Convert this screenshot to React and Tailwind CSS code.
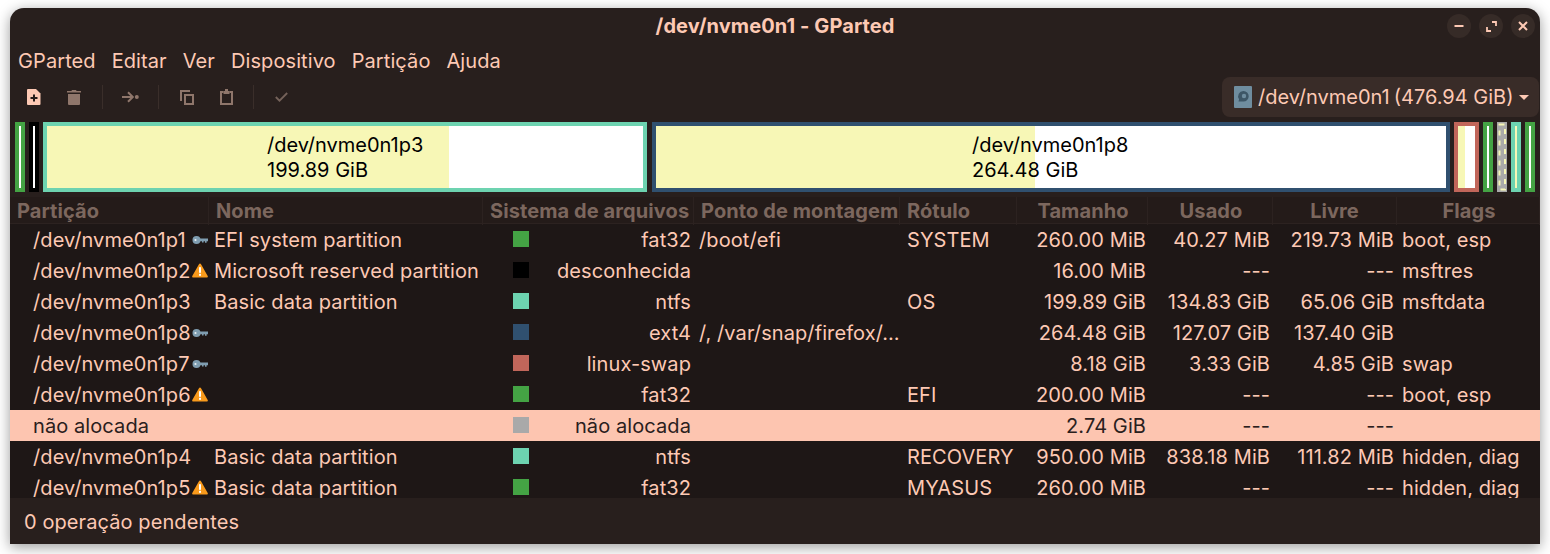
import { useState } from "react";

const font = { fontFamily: "Inter, sans-serif" };

/* ===== Small icons ===== */
const KeyIcon = () => (
  <svg width="16" height="10" viewBox="0 0 16 10">
    <circle cx="4.5" cy="5" r="4" fill="#7f9db0" />
    <circle cx="3.5" cy="5" r="1.1" fill="#e8eef2" />
    <path d="M8 3.6h8v2.6h-1.4v1.6h-1.6V6.2h-1.4v1.4H10V6.2H8z" fill="#7f9db0" />
  </svg>
);

const WarnIcon = () => (
  <svg width="16" height="15" viewBox="0 0 16 15">
    <path d="M8 0.5c.4 0 .7.2.9.5l6.8 12c.4.7-.1 1.5-.9 1.5H1.2c-.8 0-1.3-.8-.9-1.5L7.1 1c.2-.3.5-.5.9-.5z" fill="#f89a1c" />
    <rect x="7" y="4.2" width="2" height="5.6" fill="#fff" />
    <rect x="7" y="10.8" width="2" height="2" fill="#fff" />
  </svg>
);

const NewIcon = () => (
  <svg width="14" height="16" viewBox="0 0 14 16">
    <path d="M1 0h8l4.5 4.5V15a1 1 0 0 1-1 1H1a1 1 0 0 1-1-1V1a1 1 0 0 1 1-1z" fill="#fdc9b4" />
    <path d="M6 5.5h2v2.5h2.5v2H8v2.5H6V10H3.5V8H6z" fill="#251c1a" />
  </svg>
);

const TrashIcon = () => (
  <svg width="14" height="15" viewBox="0 0 14 15" fill="#8f766b">
    <path d="M5 0h4l.6 1H14v1.6H0V1h4.4z" />
    <path d="M1 4h12v10a1 1 0 0 1-1 1H2a1 1 0 0 1-1-1z" />
  </svg>
);

const ResizeIcon = () => (
  <svg width="17" height="12" viewBox="0 0 17 12" fill="none" stroke="#8f766b" strokeWidth="2">
    <path d="M0 6h10.5M6 1.2l4.8 4.8L6 10.8" />
    <circle cx="14.8" cy="6" r="2" fill="#8f766b" stroke="none" />
  </svg>
);

const CopyIcon = () => (
  <svg width="14" height="15" viewBox="0 0 14 15" fill="none" stroke="#8f766b" strokeWidth="2">
    <path d="M1 11V1h9" />
    <rect x="5" y="5" width="8" height="9" />
  </svg>
);

const PasteIcon = () => (
  <svg width="13" height="16" viewBox="0 0 13 16" fill="none" stroke="#8f766b" strokeWidth="2">
    <path d="M3.5 3H1v12h11V3H9.5" />
    <rect x="3.5" y="2" width="6" height="3" fill="#8f766b" stroke="none" />
    <rect x="5" y="0" width="3" height="3" fill="#8f766b" stroke="none" />
  </svg>
);

const CheckIcon = () => (
  <svg width="13" height="10" viewBox="0 0 13 10" fill="none" stroke="#75625a" strokeWidth="1.8">
    <path d="M.8 5l3.7 3.7L12.2 1" />
  </svg>
);

const DiskIcon = () => (
  <svg width="18" height="22" viewBox="0 0 18 22">
    <rect width="18" height="22" rx="1" fill="#6f8d9f" />
    <path d="M9.5 5a5.2 5.2 0 0 1 0 10.4H4.5l.6-2.2A5.2 5.2 0 0 1 9.5 5z" fill="#3d5666" />
    <circle cx="10" cy="10" r="2.2" fill="#6f8d9f" />
  </svg>
);

const WinButton = ({ children }) => (
  <div className="w-6 h-6 rounded-full bg-[#362b27] flex items-center justify-center">{children}</div>
);

/* ===== Partition map ===== */
const SmallBar = ({ color, inner = "bg-white" }) => (
  <div className={`w-2.5 border-4 ${color} ${inner}`} />
);

const BigBar = ({ border, width, used, label, size, left }) => (
  <div className={`relative flex border-4 ${border} ${width}`}>
    <div className={`bg-[#f7f7b6] ${used}`} />
    <div className="flex-1 bg-white" />
    <div className={`absolute top-[7px] text-[20px] leading-[25px] tracking-normal text-black ${left}`}>
      <div>{label}</div>
      <div>{size}</div>
    </div>
  </div>
);

/* ===== Table data ===== */
const columns = [
  ["Partição", "pl-[7px] text-left"],
  ["Nome", "pl-[7px] text-left"],
  ["Sistema de arquivos", "pl-[7px] text-left"],
  ["Ponto de montagem", "pl-[7px] text-left"],
  ["Rótulo", "pl-[7px] text-left"],
  ["Tamanho", "pl-0.5 text-center"],
  ["Usado", "pl-0.5 text-center"],
  ["Livre", "text-center"],
  ["Flags", "pl-0.5 text-center"],
];

const rows = [
  { part: "/dev/nvme0n1p1", icon: "key", name: "EFI system partition", color: "bg-[#44a344]", fs: "fat32", mount: "/boot/efi", label: "SYSTEM", size: "260.00 MiB", used: "40.27 MiB", free: "219.73 MiB", flags: "boot, esp" },
  { part: "/dev/nvme0n1p2", icon: "warn", name: "Microsoft reserved partition", color: "bg-black", fs: "desconhecida", mount: "", label: "", size: "16.00 MiB", used: "---", free: "---", flags: "msftres" },
  { part: "/dev/nvme0n1p3", name: "Basic data partition", color: "bg-[#6dd3b0]", fs: "ntfs", mount: "", label: "OS", size: "199.89 GiB", used: "134.83 GiB", free: "65.06 GiB", flags: "msftdata" },
  { part: "/dev/nvme0n1p8", icon: "key", name: "", color: "bg-[#30506f]", fs: "ext4", mount: "/, /var/snap/firefox/…", label: "", size: "264.48 GiB", used: "127.07 GiB", free: "137.40 GiB", flags: "" },
  { part: "/dev/nvme0n1p7", icon: "key", name: "", color: "bg-[#c1665a]", fs: "linux-swap", mount: "", label: "", size: "8.18 GiB", used: "3.33 GiB", free: "4.85 GiB", flags: "swap" },
  { part: "/dev/nvme0n1p6", icon: "warn", name: "", color: "bg-[#44a344]", fs: "fat32", mount: "", label: "EFI", size: "200.00 MiB", used: "---", free: "---", flags: "boot, esp" },
  { part: "não alocada", name: "", color: "bg-[#a9a9a9]", fs: "não alocada", mount: "", label: "", size: "2.74 GiB", used: "---", free: "---", flags: "", selected: true },
  { part: "/dev/nvme0n1p4", name: "Basic data partition", color: "bg-[#6dd3b0]", fs: "ntfs", mount: "", label: "RECOVERY", size: "950.00 MiB", used: "838.18 MiB", free: "111.82 MiB", flags: "hidden, diag" },
  { part: "/dev/nvme0n1p5", icon: "warn", name: "Basic data partition", color: "bg-[#44a344]", fs: "fat32", mount: "", label: "MYASUS", size: "260.00 MiB", used: "---", free: "---", flags: "hidden, diag" },
];

const gridCols = "grid grid-cols-[199px_274px_211px_206px_117px_131px_125px_124px_143px]";

const Row = ({ row }) => (
  <div className={`${gridCols} h-[31px] shrink-0 items-center ${row.selected ? "bg-[#fdc5b0] text-[#2a201d]" : ""}`}>
    <div className="pl-[23px] flex items-center justify-between pr-px">
      <span>{row.part}</span>
      <span className="flex w-4 justify-center">
        {row.icon === "key" && <KeyIcon />}
        {row.icon === "warn" && <WarnIcon />}
      </span>
    </div>
    <div className="pl-[5px] whitespace-nowrap">{row.name}</div>
    <div className="flex items-center justify-between pl-[30px] pr-[3px]">
      <span className={`w-4 h-4 -mt-0.5 ${row.color}`} />
      <span>{row.fs}</span>
    </div>
    <div className="pl-[5px] whitespace-nowrap">{row.mount}</div>
    <div className="pl-[7px]">{row.label}</div>
    <div className="text-right pr-[2px]">{row.size}</div>
    <div className="text-right pr-[3px]">{row.used}</div>
    <div className="text-right pr-[3px]">{row.free}</div>
    <div className="pl-[5px] whitespace-nowrap">{row.flags}</div>
  </div>
);

export default function App() {
  const [selected] = useState("/dev/nvme0n1");

  return (
    <div className="w-[1550px] h-[554px] bg-white pt-2 pl-2.5 overflow-hidden" style={font}>
      <div className="w-[1530px] h-[536px] flex flex-col bg-[#281f1d] text-[#fdc9b4] text-[20px] tracking-[0.09px] rounded-t-[14px] shadow-[0_3px_14px_rgba(0,0,0,0.4)] overflow-hidden">

        {/* Title bar */}
        <div className="relative h-[38px] shrink-0 flex items-center justify-center font-bold pb-0.5">
          /dev/nvme0n1 - GParted
          <div className="absolute right-[5px] top-1.5 flex gap-2">
            <WinButton>
              <svg width="10" height="10" viewBox="0 0 10 10"><rect x="0.5" y="4" width="9" height="2" fill="#fdc9b4" /></svg>
            </WinButton>
            <WinButton>
              <svg width="11" height="11" viewBox="0 0 11 11" fill="none" stroke="#fdc9b4" strokeWidth="1.8"><path d="M6 1h4v4M5 10H1V6" /></svg>
            </WinButton>
            <WinButton>
              <svg width="10" height="10" viewBox="0 0 10 10" fill="none" stroke="#fdc9b4" strokeWidth="2"><path d="M1 1l8 8M9 1l-8 8" /></svg>
            </WinButton>
          </div>
        </div>

        {/* Menu bar */}
        <div className="h-[30px] shrink-0 flex items-center gap-4 px-2">
          <span>GParted</span>
          <span>Editar</span>
          <span>Ver</span>
          <span>Dispositivo</span>
          <span>Partição</span>
          <span>Ajuda</span>
        </div>

        {/* Toolbar */}
        <div className="h-[42px] shrink-0 flex items-center pl-[17px]">
          <NewIcon />
          <span className="w-[26px]" />
          <TrashIcon />
          <span className="w-px h-6 bg-[#3a2e2a] ml-[21px] mr-[19px]" />
          <ResizeIcon />
          <span className="w-px h-6 bg-[#3a2e2a] ml-[19px] mr-[21px]" />
          <CopyIcon />
          <span className="w-[26px]" />
          <PasteIcon />
          <span className="w-px h-6 bg-[#3a2e2a] ml-[20px] mr-[21px]" />
          <CheckIcon />
          <div className="ml-auto mr-px h-10 w-[317px] rounded-lg bg-[#392c28] flex items-center pl-3 whitespace-nowrap tracking-normal">
            <DiskIcon />
            <span className="ml-[6px]">{selected}</span>
            <span className="ml-1">(476.94 GiB)</span>
            <svg className="ml-1.5" width="10" height="5" viewBox="0 0 10 5"><path d="M0 0h10L5 5z" fill="#fdc9b4" /></svg>
          </div>
        </div>

        {/* Partition map */}
        <div className="h-[70px] mt-1 shrink-0 flex gap-1 pl-[5px]">
          <SmallBar color="border-[#44a344]" />
          <SmallBar color="border-black" />
          <BigBar border="border-[#6dd3b0]" width="w-[604px]" used="w-[402px]" label="/dev/nvme0n1p3" size="199.89 GiB" left="left-[220px]" />
          <div className="ml-px flex">
            <BigBar border="border-[#30506f]" width="w-[798px]" used="w-[379px]" label="/dev/nvme0n1p8" size="264.48 GiB" left="left-[316px]" />
          </div>
          <div className="w-[25px] flex border-4 border-[#c1665a]">
            <div className="w-[7px] bg-[#f7f7b6]" />
            <div className="flex-1 bg-white" />
          </div>
          <SmallBar color="border-[#44a344]" />
          <svg width="10" height="70" viewBox="0 0 10 70">
            <rect width="10" height="70" fill="#a9a9a9" />
            <rect x="2.5" y="2.5" width="5.5" height="65" fill="none" stroke="#f7f7b6" strokeWidth="2" strokeDasharray="5 5" />
          </svg>
          <SmallBar color="border-[#6dd3b0]" inner="bg-[#f7f7b6]" />
          <SmallBar color="border-[#44a344]" />
        </div>

        {/* Partition table */}
        <div className="mt-[5px] flex-1 min-h-0 bg-[#1e1716] flex flex-col overflow-hidden">
          <div className={`${gridCols} h-[27px] shrink-0 items-center bg-[#241b19] font-bold text-[#7c675e] border-b border-[#2c2220]`}>
            {columns.map(([title, align]) => (
              <div key={title} className={`${align} h-full leading-[28px] whitespace-nowrap border-r border-[#2c2220]`}>
                {title}
              </div>
            ))}
          </div>
          {rows.map((row) => (
            <Row key={row.part} row={row} />
          ))}
        </div>

        {/* Status bar */}
        <div className="h-[46px] shrink-0 flex items-center px-[14px] pt-0.5 bg-[#281f1d]">0 operação pendentes</div>
      </div>
    </div>
  );
}
